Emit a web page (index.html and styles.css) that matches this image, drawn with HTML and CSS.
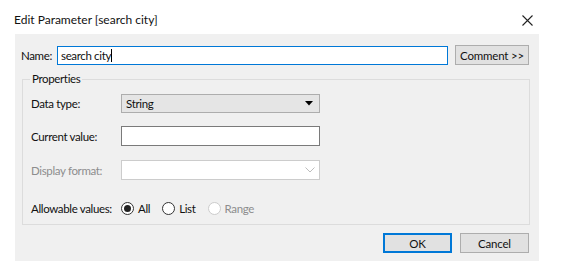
FILE: index.html
```html
<!DOCTYPE html>
<html lang="en">
<head>
    <meta charset="UTF-8">
    <meta name="viewport" content="width=device-width, initial-scale=1.0">
    <title>Edit Parameter</title>
    <link rel="stylesheet" href="styles.css">
</head>
<body>

<div class="titlebar">
    <span class="title">Edit Parameter [search city]</span>
    <span class="close">
        <svg width="11" height="11" viewBox="0 0 11 11"><path d="M0.5 0.5 L10.5 10.5 M10.5 0.5 L0.5 10.5" stroke="#222" stroke-width="1.1" fill="none"/></svg>
    </span>
</div>

<div class="panel">
    <div class="name-row">
        <label class="name-label">Name:</label>
        <div class="name-input">search city<span class="caret"></span></div>
        <button class="btn comment-btn">Comment &gt;&gt;</button>
    </div>

    <fieldset class="props">
        <legend>Properties</legend>

        <div class="row row-type">
            <label>Data type:</label>
            <div class="select">
                <span>String</span>
                <svg width="8" height="5" viewBox="0 0 8 5"><path d="M0 0 L8 0 L4 4.5 Z" fill="#000"/></svg>
            </div>
        </div>

        <div class="row row-value">
            <label>Current value:</label>
            <div class="text-box"></div>
        </div>

        <div class="row row-format">
            <label class="disabled">Display format:</label>
            <div class="text-box combo-disabled">
                <svg width="10" height="6" viewBox="0 0 10 6"><path d="M0.5 0.5 L5 5 L9.5 0.5" stroke="#bdbdbd" stroke-width="1" fill="none"/></svg>
            </div>
        </div>

        <div class="row row-allow">
            <label>Allowable values:</label>
            <div class="radios">
                <span class="radio checked"></span><span class="radio-text">All</span>
                <span class="radio"></span><span class="radio-text">List</span>
                <span class="radio off"></span><span class="radio-text disabled">Range</span>
            </div>
        </div>
    </fieldset>

    <div class="actions">
        <button class="btn ok-btn">OK</button>
        <button class="btn">Cancel</button>
    </div>
</div>

</body>
</html>
```

FILE: styles.css
```css
body {
    margin: 0;
    background-color: #fff;
    font-family: Lato, "Open Sans", sans-serif;
    font-size: 11.5px;
    letter-spacing: -0.35px;
    color: #111;
    width: 561px;
    height: 271px;
}
.titlebar {
    height: 34px;
    display: flex;
    align-items: center;
    justify-content: space-between;
    padding: 0 28px 0 14px;
}
.title {
    font-size: 12px;
    letter-spacing: 0;
    margin-top: 4px;
}
.close {
    display: flex;
    margin-top: 6px;
}
.panel {
    margin-left: 15px;
    width: 524px;
    height: 227px;
    background-color: #f0f0f0;
    box-sizing: border-box;
    padding-top: 11px;
}
.name-row {
    display: flex;
    align-items: center;
    height: 20px;
}
.name-label {
    width: 36px;
    padding-left: 6px;
    flex-shrink: 0;
}
.name-input {
    width: 391px;
    height: 19px;
    box-sizing: border-box;
    border: 1px solid #0078d7;
    background-color: #fff;
    padding-left: 3px;
    display: flex;
    align-items: center;
}
.caret {
    display: inline-block;
    width: 1px;
    height: 13px;
    background-color: #000;
}
.btn {
    font-family: inherit;
    font-size: 11.5px;
    letter-spacing: -0.2px;
    background-color: #e1e1e1;
    border: 1px solid #adadad;
    height: 20px;
    width: 69px;
    padding: 0;
    color: #111;
}
.comment-btn {
    margin-left: 7px;
    width: 74px;
}
.props {
    margin: 7px 0 0 7px;
    width: 508px;
    box-sizing: border-box;
    border: 1px solid #dcdcdc;
    padding: 0 7px 0 8px;
    height: 153px;
}
.props legend {
    padding: 0 2px;
    margin-left: -1px;
    line-height: 14px;
}
.row {
    display: flex;
    align-items: center;
}
.row label {
    width: 90px;
    flex-shrink: 0;
    white-space: nowrap;
}
.row-type {
    margin-top: 8px;
}
.row-value {
    margin-top: 13px;
}
.row-format {
    margin-top: 14px;
}
.row-allow {
    margin-top: 20px;
    height: 16px;
}
.select {
    width: 199px;
    height: 19px;
    box-sizing: border-box;
    background-color: #e5e5e5;
    border: 1px solid #adadad;
    display: flex;
    align-items: center;
    justify-content: space-between;
    padding: 0 6px 0 4px;
}
.text-box {
    width: 199px;
    height: 20px;
    box-sizing: border-box;
    background-color: #fff;
    border: 1px solid #7a7a7a;
}
.combo-disabled {
    border-color: #cccccc;
    display: flex;
    align-items: center;
    justify-content: flex-end;
    padding-right: 4px;
}
.disabled {
    color: #8d8d8d;
}
.radios {
    display: flex;
    align-items: center;
}
.radio {
    width: 13px;
    height: 13px;
    box-sizing: border-box;
    border: 1px solid #333;
    border-radius: 50%;
    background-color: #fff;
    position: relative;
}
.radio.checked::after {
    content: "";
    position: absolute;
    left: 2px;
    top: 2px;
    width: 7px;
    height: 7px;
    border-radius: 50%;
    background-color: #222;
}
.radio.off {
    border-color: #cccccc;
}
.radio-text {
    margin: 0 12px 0 4px;
}
.actions {
    display: flex;
    justify-content: flex-end;
    gap: 8px;
    margin-top: 8px;
    padding-right: 10px;
}
.ok-btn {
    border: 2px solid #0078d7;
}
```
